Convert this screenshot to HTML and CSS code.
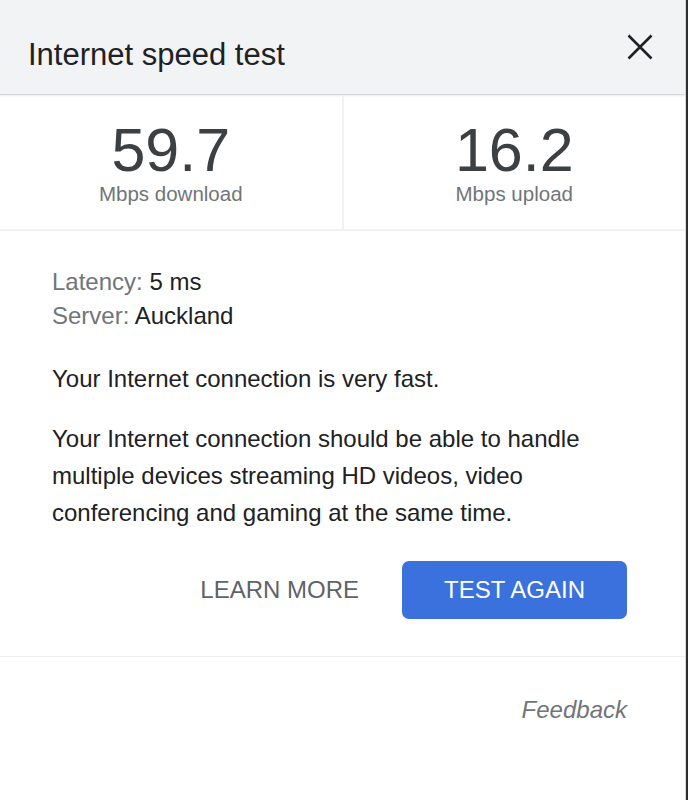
FILE: index.html
```html
<!DOCTYPE html>
<html lang="en">
<head>
    <meta charset="UTF-8">
    <title>Internet speed test</title>
    <link rel="stylesheet" href="styles.css">
</head>
<body>
    <div class="panel">
        <div class="header">
            <h1 class="title">Internet speed test</h1>
            <button class="close" aria-label="Close">
                <svg width="26" height="26" viewBox="0 0 26 26">
                    <path d="M1.5 1.5 L24.5 24.5 M24.5 1.5 L1.5 24.5" stroke="#202124" stroke-width="2.6" fill="none"/>
                </svg>
            </button>
        </div>

        <div class="stats">
            <div class="stat">
                <div class="stat-value">59.7</div>
                <div class="stat-label">Mbps download</div>
            </div>
            <div class="stat">
                <div class="stat-value">16.2</div>
                <div class="stat-label">Mbps upload</div>
            </div>
        </div>

        <div class="content">
            <div class="details">
                <div><span class="key">Latency:</span> 5 ms</div>
                <div><span class="key">Server:</span> Auckland</div>
            </div>

            <p class="summary">Your Internet connection is very fast.</p>
            <p class="summary text">Your Internet connection should be able to handle multiple devices streaming HD videos, video conferencing and gaming at the same time.</p>

            <div class="actions">
                <button class="link-btn">LEARN MORE</button>
                <button class="primary-btn">TEST AGAIN</button>
            </div>
        </div>

        <div class="footer">
            <span class="feedback">Feedback</span>
        </div>
    </div>
</body>
</html>
```

FILE: styles.css
```css
/* General Styling */
body {
    margin: 0;
    background: #2e2e2e;
    font-family: "Liberation Sans", Arial, sans-serif;
    color: #202124;
}

.panel {
    width: 685px;
    height: 800px;
    background: #ffffff;
    border-right: 1px solid #dadce0;
}

/* Header */
.header {
    height: 95px;
    box-sizing: border-box;
    background: #f1f3f4;
    border-bottom: 1px solid #d3d5d8;
    box-shadow: 0 1px 2px rgba(0, 0, 0, 0.08);
    display: flex;
    align-items: center;
    justify-content: space-between;
    padding: 0 32px 0 28px;
}

.title {
    margin: 0;
    padding-top: 15px;
    font-size: 31px;
    font-weight: normal;
    color: #202124;
}

.close {
    border: none;
    background: none;
    padding: 0;
    width: 26px;
    height: 26px;
    cursor: pointer;
    margin-top: -1px;
}

.close svg {
    display: block;
}

/* Stats */
.stats {
    display: flex;
    height: 133px;
    margin-top: 1px;
    border-bottom: 2px solid #f1f1f1;
}

.stat {
    flex: 1;
    display: flex;
    flex-direction: column;
    align-items: center;
    justify-content: center;
    gap: 2px;
}

.stat + .stat {
    border-left: 2px solid #f1f1f1;
}

.stat-value {
    font-size: 61px;
    line-height: 60px;
    color: #3c4043;
}

.stat-label {
    font-size: 20.5px;
    line-height: 24px;
    color: #70757a;
}

/* Content */
.content {
    padding: 34px 58px 37px 52px;
    border-bottom: 1px solid #eeeeee;
}

.details {
    font-size: 24px;
    line-height: 34px;
}

.key {
    color: #70757a;
}

.summary {
    margin: 27px 0 0;
    font-size: 24px;
    line-height: 37px;
}

.summary.text {
    margin-top: 23px;
}

.actions {
    display: flex;
    justify-content: flex-end;
    align-items: center;
    gap: 43px;
    margin-top: 30px;
}

.link-btn {
    border: none;
    background: none;
    padding: 0;
    font-family: inherit;
    font-size: 24px;
    color: #5f6368;
    cursor: pointer;
}

.primary-btn {
    width: 225px;
    height: 58px;
    border: none;
    border-radius: 7px;
    background: #3a71dd;
    color: #ffffff;
    font-family: inherit;
    font-size: 24px;
    cursor: pointer;
}

/* Footer */
.footer {
    display: flex;
    justify-content: flex-end;
    padding: 36px 58px 0 0;
}

.feedback {
    font-size: 24px;
    line-height: 34px;
    font-style: italic;
    color: #70757a;
}
```
